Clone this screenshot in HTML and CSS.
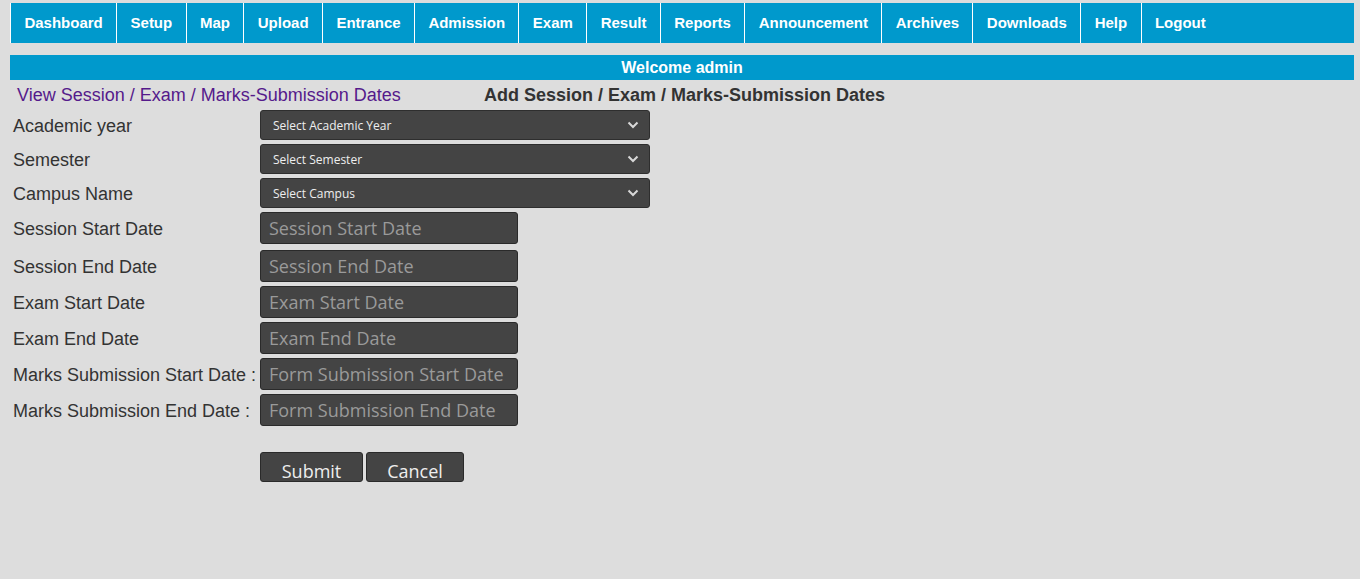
FILE: index.html
```html
<!DOCTYPE html>
<html>
<head>
<meta charset="utf-8">
<title>Session / Exam / Marks-Submission Dates</title>
<link rel="stylesheet" href="styles.css">
</head>
<body>
<div class="page">
  <nav class="nav">
    <a href="#">Dashboard</a>
    <a href="#">Setup</a>
    <a href="#">Map</a>
    <a href="#">Upload</a>
    <a href="#">Entrance</a>
    <a href="#">Admission</a>
    <a href="#">Exam</a>
    <a href="#">Result</a>
    <a href="#">Reports</a>
    <a href="#">Announcement</a>
    <a href="#">Archives</a>
    <a href="#">Downloads</a>
    <a href="#">Help</a>
    <a href="#">Logout</a>
  </nav>
  <div class="welcome">Welcome admin</div>
  <div class="heading-row">
    <div class="view-cell"><a class="view-link" href="#">View Session / Exam / Marks-Submission Dates</a></div>
    <div class="add-title">Add Session / Exam / Marks-Submission Dates</div>
  </div>
  <form class="form">
    <div class="row">
      <label class="lbl">Academic year</label>
      <div class="select-wrap">
        <select class="sel"><option>Select Academic Year</option></select>
        <svg class="chev" width="12" height="8" viewBox="0 0 12 8"><path d="M1.5 1.5 L6 6 L10.5 1.5" fill="none" stroke="#d8d8d8" stroke-width="2"/></svg>
      </div>
    </div>
    <div class="row">
      <label class="lbl">Semester</label>
      <div class="select-wrap">
        <select class="sel"><option>Select Semester</option></select>
        <svg class="chev" width="12" height="8" viewBox="0 0 12 8"><path d="M1.5 1.5 L6 6 L10.5 1.5" fill="none" stroke="#d8d8d8" stroke-width="2"/></svg>
      </div>
    </div>
    <div class="row">
      <label class="lbl">Campus Name</label>
      <div class="select-wrap">
        <select class="sel"><option>Select Campus</option></select>
        <svg class="chev" width="12" height="8" viewBox="0 0 12 8"><path d="M1.5 1.5 L6 6 L10.5 1.5" fill="none" stroke="#d8d8d8" stroke-width="2"/></svg>
      </div>
    </div>
    <div class="row row-wide">
      <label class="lbl">Session Start Date</label>
      <input class="inp" type="text" placeholder="Session Start Date">
    </div>
    <div class="row">
      <label class="lbl">Session End Date</label>
      <input class="inp" type="text" placeholder="Session End Date">
    </div>
    <div class="row">
      <label class="lbl">Exam Start Date</label>
      <input class="inp" type="text" placeholder="Exam Start Date">
    </div>
    <div class="row">
      <label class="lbl">Exam End Date</label>
      <input class="inp" type="text" placeholder="Exam End Date">
    </div>
    <div class="row">
      <label class="lbl">Marks Submission Start Date :</label>
      <input class="inp" type="text" placeholder="Form Submission Start Date">
    </div>
    <div class="row">
      <label class="lbl">Marks Submission End Date :</label>
      <input class="inp" type="text" placeholder="Form Submission End Date">
    </div>
    <div class="row buttons">
      <span class="lbl"></span>
      <div class="btns">
        <button type="button" class="btn btn-submit">Submit</button>
        <button type="button" class="btn btn-cancel">Cancel</button>
      </div>
    </div>
  </form>
</div>
</body>
</html>
```

FILE: styles.css
```css
* { box-sizing: border-box; }

body {
  margin: 0;
  background: #dddddd;
  font-family: "Liberation Sans", Arial, sans-serif;
  color: #333333;
}

.page {
  padding: 3px 6px 0 10px;
}

.nav {
  display: flex;
  height: 40px;
  background: #0099cc;
}

.nav a {
  display: block;
  border-left: 1px solid #ffffff;
  padding: 0 13.4px;
  line-height: 40px;
  font-size: 15px;
  font-weight: bold;
  color: #ffffff;
  text-decoration: none;
  white-space: nowrap;
}

.welcome {
  margin-top: 12px;
  height: 25px;
  line-height: 25px;
  background: #0099cc;
  color: #ffffff;
  font-weight: bold;
  font-size: 16px;
  text-align: center;
}

.heading-row {
  display: flex;
  height: 30px;
  align-items: center;
}

.view-cell {
  width: 474px;
  padding-left: 7px;
}

.view-link {
  font-size: 18px;
  color: #551a8b;
  text-decoration: none;
}

.add-title {
  font-size: 18px;
  font-weight: bold;
  color: #333333;
}

.form {
  margin: 0;
}

.row {
  display: flex;
  align-items: center;
  margin-bottom: 4px;
}

.row-wide {
  margin-bottom: 6px;
}

.lbl {
  width: 250px;
  padding: 2px 0 0 3px;
  font-size: 18px;
  color: #333333;
  white-space: nowrap;
}

.select-wrap {
  position: relative;
  width: 390px;
  height: 30px;
}

.sel {
  appearance: none;
  -webkit-appearance: none;
  width: 100%;
  height: 30px;
  margin: 0;
  padding: 0 30px 0 12px;
  background: #444444;
  border: 1px solid #2e2e2e;
  border-radius: 3px;
  color: #eeeeee;
  font-family: "Open Sans", sans-serif;
  font-size: 12px;
  outline: none;
}

.chev {
  position: absolute;
  right: 11px;
  top: 11px;
  pointer-events: none;
}

.inp {
  width: 258px;
  height: 32px;
  margin: 0;
  padding: 0 8px;
  background: #444444;
  border: 1px solid #2a2a2a;
  border-radius: 3px;
  color: #eeeeee;
  font-family: "Open Sans", sans-serif;
  font-size: 18px;
  outline: none;
}

.inp::placeholder {
  color: #9a9a9a;
  opacity: 1;
}

.buttons {
  margin-top: 26px;
}

.btns {
  display: flex;
  gap: 3px;
}

.btn {
  height: 30px;
  margin: 0;
  padding: 7px 0 0;
  background: #444444;
  border: 1px solid #2a2a2a;
  border-radius: 3px;
  color: #eeeeee;
  font-family: "Open Sans", sans-serif;
  font-size: 18px;
  line-height: 22px;
  overflow: hidden;
}

.btn-submit { width: 103px; }
.btn-cancel { width: 98px; }
```
